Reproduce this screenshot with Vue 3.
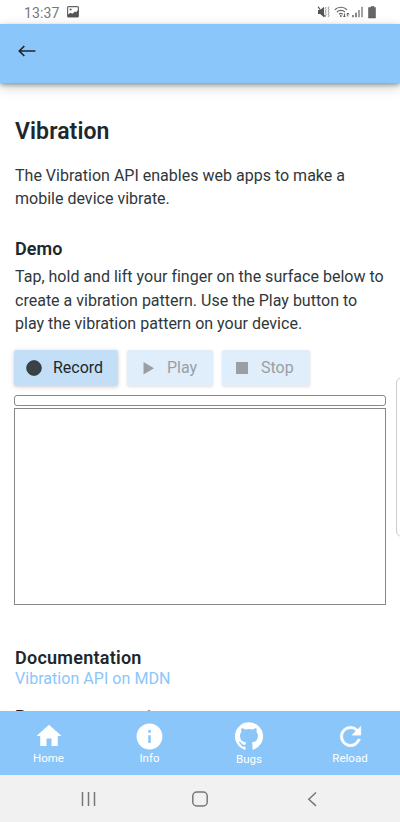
<script setup>
const tabs = [
  { id: 'home', label: 'Home' },
  { id: 'info', label: 'Info' },
  { id: 'bugs', label: 'Bugs' },
  { id: 'reload', label: 'Reload' },
]
</script>

<template>
  <div class="phone">
    <div class="status">
      <span class="clock">13:37</span>
      <svg class="picture" width="12" height="12" viewBox="0 0 12 12">
        <rect x=".6" y=".6" width="10.8" height="10.4" rx="1" fill="#fff" stroke="#666" stroke-width="1.2" />
        <path d="M1 8.500 3.400 6.800l2 1L8 5.600l1 .7L11 4v7H1z" fill="#555" />
        <circle cx="3.6" cy="3.6" r="1" fill="#555" />
      </svg>
      <svg class="signals" width="62" height="14" viewBox="0 0 62 14">
        <path d="M1 5h2.200L7 1.800v10.400L3.200 9H1z" fill="#555" />
        <path d="M1 1.600 8.300 12" stroke="#555" stroke-width="1.1" />
        <path d="M9.200 2l-1 1.300 1 1.300-1 1.300 1 1.300-1 1.300 1 1.300-1 1.300M12 1.500l-1 1.500 1 1.500-1 1.500 1 1.500-1 1.500 1 1.500-1 1.500" fill="none" stroke="#777" stroke-width=".8" />
        <path d="M17.800 4.700c3.400-3.300 8.800-3.300 12.200 0M19.900 7c2.200-2.200 5.800-2.200 8 0M22 9.200c1-.9 2.700-.9 3.700 0" fill="none" stroke="#666" stroke-width="1.2" />
        <circle cx="23.8" cy="11" r="1" fill="#666" />
        <path d="M27.400 8.500V12m-1.200-1.200L27.400 12l1.200-1.200M30.800 11.500V8m-1.300 1.300L30.800 8l1.300 1.300" fill="none" stroke="#555" stroke-width="1" />
        <path d="M36 10v2.300M39 7.700v4.600" stroke="#555" stroke-width="1.4" />
        <path d="M42 4.900v7.400M45 1.800v10.500" stroke="#666" stroke-width="1.2" />
        <path d="M54 1.500h3v1.100h1.500V13h-7V2.600H54z" fill="#666" stroke="#555" stroke-width=".5" />
      </svg>
    </div>

    <header class="topbar">
      <svg width="18" height="12" viewBox="0 0 18 12">
        <path d="M17.400 6H1.400M6.300 1 1.300 6l5 5" fill="none" stroke="#20272c" stroke-width="1.700" />
      </svg>
    </header>

    <main class="content">
      <h1>Vibration</h1>
      <p class="intro">The Vibration API enables web apps to make a<br>mobile device vibrate.</p>
      <h2 class="demo">Demo</h2>
      <p class="help">Tap, hold and lift your finger on the surface below to<br>create a vibration pattern. Use the Play button to<br>play the vibration pattern on your device.</p>
      <div class="actions">
        <button class="record">
          <svg width="18" height="18" viewBox="0 0 18 18"><circle cx="9" cy="9" r="7.4" fill="#3a4245" stroke="#252c30" stroke-width=".7" /></svg>
          Record
        </button>
        <button class="play" disabled>
          <svg width="18" height="18" viewBox="0 0 18 18"><path d="M5.500 3v12.500L16 9.200z" fill="#999fa4" /></svg>
          Play
        </button>
        <button class="stop" disabled>
          <svg width="18" height="18" viewBox="0 0 18 18"><path d="M3 3h12v12H3z" fill="#999fa4" /></svg>
          Stop
        </button>
      </div>
      <div class="timeline"></div>
      <div class="surface"></div>
      <h2 class="docs">Documentation</h2>
      <a class="link">Vibration API on MDN</a>
      <h2 class="support">Browser support</h2>
      <div class="edge-handle"></div>
    </main>

    <nav class="tabs">
      <div v-for="tab in tabs" :key="tab.id" class="tab" :class="tab.id">
        <svg v-if="tab.id === 'home'" width="30" height="30" viewBox="0 0 24 24">
          <path d="M10 20v-6h4v6h5v-8h3L12 3 2 12h3v8z" />
        </svg>
        <svg v-else-if="tab.id === 'info'" width="31" height="31" viewBox="0 0 24 24">
          <path d="M12 2a10 10 0 1 0 0 20 10 10 0 0 0 0-20zm1 15h-2v-6h2zm0-8h-2V7h2z" />
        </svg>
        <svg v-else-if="tab.id === 'bugs'" width="28" height="28" viewBox="0 0 24 24">
          <path d="M12 .3a12 12 0 0 0-3.800 23.400c.6.1.8-.3.8-.6v-2c-3.300.7-4-1.600-4-1.600-.6-1.400-1.400-1.800-1.400-1.800-1-.7.1-.7.1-.7 1.200 0 1.900 1.200 1.900 1.200 1 1.800 2.800 1.300 3.500 1 0-.8.4-1.300.7-1.600-2.700-.3-5.500-1.300-5.500-6 0-1.200.5-2.300 1.300-3.100-.2-.4-.6-1.600 0-3.200 0 0 1-.3 3.400 1.200a11.500 11.500 0 0 1 6 0c2.300-1.500 3.300-1.200 3.300-1.200.6 1.600.2 2.800 0 3.200.9.8 1.300 1.900 1.300 3.200 0 4.600-2.800 5.600-5.500 5.900.5.4.9 1 .9 2.200v3.300c0 .3.1.7.8.6A12 12 0 0 0 12 .3" />
        </svg>
        <svg v-else width="31" height="31" viewBox="0 0 24 24">
          <path d="M17.650 6.350A7.960 7.960 0 0 0 12 4a8 8 0 1 0 7.730 10h-2.080A6 6 0 1 1 12 6c1.660 0 3.140.69 4.220 1.780L13 11h7V4z" stroke="#fff" stroke-width=".3" />
        </svg>
        <span>{{ tab.label }}</span>
      </div>
    </nav>

    <div class="system">
      <svg width="16" height="16" viewBox="0 0 16 16"><path d="M2.500 1v14M8.500 1v14M14.500 1v14" /></svg>
      <svg width="16" height="16" viewBox="0 0 16 16"><rect x=".8" y="1" width="14.4" height="14" rx="4" /></svg>
      <svg width="16" height="16" viewBox="0 0 16 16"><path d="M12 1.500 4.800 8.200l7.200 6.700" /></svg>
    </div>
  </div>
</template>

<style>
body { margin: 0; background: #fff; }
</style>

<style scoped>
* { box-sizing: border-box; }
.phone {
  width: 400px;
  height: 822px;
  display: flex;
  flex-direction: column;
  overflow: hidden;
  background: #fff;
  color: #20272c;
  font-family: Roboto, sans-serif;
}
.status {
  height: 24px;
  flex: none;
  display: flex;
  align-items: center;
  padding: 0 21px 0 24px;
}
.clock { color: #777; font-size: 14px; letter-spacing: 0.1px; line-height: 24px; padding-top: 1px; }
.picture { margin-left: 8px; }
.signals { margin-left: auto; }
.topbar {
  height: 59px;
  flex: none;
  padding: 20.500px 0 0 17.500px;
  background: #8bc6fa;
  box-shadow: 0 2px 4px rgba(0, 0, 0, 0.3), 0 4px 12px rgba(0, 0, 0, 0.2);
  position: relative;
  z-index: 1;
}
.topbar svg { display: block; }
.content {
  flex: 1;
  min-height: 0;
  overflow: hidden;
  padding: 34px 14px 0 15px;
  position: relative;
}
h1, h2, p { margin: 0; }
h1 { font-size: 23px; font-weight: 600; line-height: 30px; letter-spacing: 0.1px; }
p { font-size: 16px; line-height: 23.500px; letter-spacing: 0.01px; white-space: nowrap; color: #30373b; }
.intro { margin-top: 16.500px; }
h2 { font-size: 18px; font-weight: 600; line-height: 24px; letter-spacing: 0.25px; }
.demo { margin-top: 26.500px; letter-spacing: 0.05px; }
.help { margin-top: 4px; }
.actions { display: flex; gap: 9px; margin: 14px 0 0 -1px; }
button {
  display: flex;
  align-items: center;
  height: 36px;
  padding: 0 0 0 11px;
  border: 0;
  border-radius: 2px;
  background: #c2dff7;
  color: #20272c;
  font: 400 16px Roboto, sans-serif;
  letter-spacing: 0;
  box-shadow: 0 1px 4px rgba(0, 0, 0, 0.2);
}
button svg { margin-right: 10px; }
button:disabled { background: #e0eefc; color: #999fa4; box-shadow: 0 1px 3px rgba(0, 0, 0, 0.12); }
.record { width: 104px; }
.play { width: 86px; }
.play svg { margin-right: 11px; }
.stop { width: 88px; }
.timeline { height: 11px; margin-top: 9px; border: 1px solid #888; border-radius: 3px; }
.surface { height: 197px; margin-top: 2px; border: 1px solid #888; }
.timeline, .surface { margin-left: -1px; }
.docs { margin-top: 41px; }
.link { display: block; color: #8bc6fa; font-size: 16px; line-height: 20px; letter-spacing: 0.04px; margin-top: -1px; }
.support { margin-top: 16px; }
.edge-handle {
  position: absolute;
  top: 294px;
  right: -8px;
  width: 12px;
  height: 160px;
  border: 1px solid #ccc;
  border-radius: 6px;
  background: #fff;
}
.tabs {
  height: 64px;
  flex: none;
  display: grid;
  grid-template-columns: 97px 105px 94px 104px;
  background: #8bc6fa;
}
.tab {
  display: flex;
  flex-direction: column;
  align-items: center;
  color: #fff;
  font-size: 11.500px;
  line-height: 14px;
  padding-top: 10px;
}
.tab svg { fill: #fff; flex: none; }
.home svg, .info svg, .reload svg { margin-bottom: -1px; }
.home svg { margin-bottom: 0; }
.bugs { padding-top: 11px; }
.bugs svg { margin-bottom: 2px; }
.reload { padding-left: 4px; }
.system {
  height: 47px;
  flex: none;
  display: grid;
  grid-template-columns: repeat(3, 112px);
  justify-content: center;
  justify-items: center;
  align-items: center;
  background: #f1f1f1;
}
.system svg { fill: none; stroke: #777; stroke-width: 1.500; }
</style>
